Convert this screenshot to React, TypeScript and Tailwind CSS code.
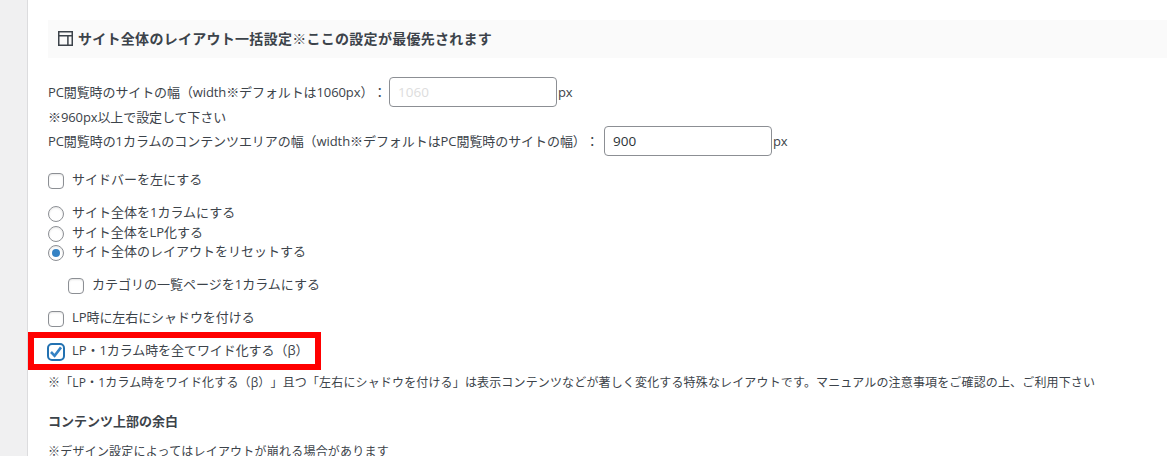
import type { ReactNode } from "react";

const CheckMark = () => (
  <svg viewBox="0 0 16 16" className="h-4 w-4 shrink-0" fill="none" stroke="#3582c4" strokeWidth="2.6">
    <path d="M3 8 6.6 11.8 13 3.4" />
  </svg>
);

const Box = ({ checked }: { checked?: boolean }) => (
  <span
    className={
      checked
        ? "-mx-px flex h-[18px] w-[18px] shrink-0 items-center justify-center rounded-[5px] border-2 border-[#2271b1] bg-white"
        : "h-4 w-4 shrink-0 rounded-[4px] border border-[#8c8f94] bg-white shadow-[inset_0_1px_2px_rgba(0,0,0,0.1)]"
    }
  >
    {checked && <CheckMark />}
  </span>
);

const Radio = ({ checked }: { checked?: boolean }) => (
  <span className="flex h-4 w-4 shrink-0 items-center justify-center rounded-full border border-[#8c8f94] bg-white shadow-[inset_0_1px_2px_rgba(0,0,0,0.1)]">
    {checked && <span className="h-2 w-2 rounded-full bg-[#3582c4]" />}
  </span>
);

type OptionProps = {
  control: ReactNode;
  className?: string;
  children: ReactNode;
};

const Option = ({ control, className = "", children }: OptionProps) => (
  <label className={`flex h-4 items-center ${className}`}>
    {control}
    <span className="ml-2 pb-[3px] whitespace-nowrap">{children}</span>
  </label>
);

const App = () => {
  return (
    <div className="relative flex h-[456px] w-[1167px] overflow-hidden bg-[#f0f0f1] font-['Open_Sans','Noto_Sans_CJK_JP',sans-serif] text-[13px] leading-[19px] text-[#3c434a] [text-spacing-trim:space-all]">
      <div className="w-[28px] shrink-0 border-r border-[#dcdcde]" />
      <main className="min-w-0 flex-1 bg-white pt-5 pl-5">
        <h2 className="flex h-[38px] items-center bg-[#fafafa] pb-0.5 pl-2.5 text-[14px] font-bold">
          <svg viewBox="0 0 15 15" className="h-[15px] w-[15px] shrink-0" fill="none" stroke="#3c434a" strokeWidth="1.5">
            <path d="M.75 .75h13.5v13.5H.75zM.75 4.75h13.5M9.9 4.75v9.5" />
          </svg>
          <span className="ml-[5px] tracking-[0.28px] whitespace-nowrap">
            サイト全体のレイアウト一括設定※ここの設定が最優先されます
          </span>
        </h2>

        <div className="mt-[19px] flex h-[30px] items-center whitespace-nowrap">
          <span className="w-[341px] tracking-[-0.1px]">PC閲覧時のサイトの幅（width※デフォルトは1060px）：</span>
          <input
            type="text"
            placeholder="1060"
            className="h-[30px] w-[168px] rounded-[4px] border border-[#8c8f94] bg-white px-2 text-[13.5px] text-[#2c3338] outline-none placeholder:text-[#dddddd]"
          />
          <span className="ml-px tracking-[-0.3px]">px</span>
        </div>
        <p className="h-[19px] pt-px tracking-[-0.1px] whitespace-nowrap">※960px以上で設定して下さい</p>
        <div className="flex h-[30px] items-center whitespace-nowrap">
          <span className="w-[556px] tracking-[-0.07px]">
            PC閲覧時の1カラムのコンテンツエリアの幅（width※デフォルトはPC閲覧時のサイトの幅）：
          </span>
          <input
            type="text"
            defaultValue="900"
            className="h-[30px] w-[168px] rounded-[4px] border border-[#8c8f94] bg-white px-2 text-[13.5px] text-[#2c3338] outline-none"
          />
          <span className="ml-px tracking-[-0.3px]">px</span>
        </div>

        <Option control={<Box />} className="mt-[17px]">サイドバーを左にする</Option>

        <Option control={<Radio />} className="mt-[17px]">サイト全体を1カラムにする</Option>
        <Option control={<Radio />} className="mt-1 tracking-[-0.07px]">サイト全体をLP化する</Option>
        <Option control={<Radio checked />} className="mt-[3px]">サイト全体のレイアウトをリセットする</Option>

        <Option control={<Box />} className="mt-[17px] ml-5">カテゴリの一覧ページを1カラムにする</Option>
        <Option control={<Box />} className="mt-[17px] tracking-[-0.07px]">LP時に左右にシャドウを付ける</Option>
        <Option control={<Box checked />} className="mt-[17px] tracking-[-0.07px]">LP・1カラム時を全てワイド化する（β）</Option>

        <p className="mt-[13px] text-[12px] tracking-[0.15px] whitespace-nowrap">
          ※「LP・1カラム時をワイド化する（β）」且つ「左右にシャドウを付ける」は表示コンテンツなどが著しく変化する特殊なレイアウトです。マニュアルの注意事項をご確認の上、ご利用下さい
        </p>
        <h3 className="mt-5 font-bold">コンテンツ上部の余白</h3>
        <p className="mt-[11px] text-[12px] tracking-[0.22px] whitespace-nowrap">
          ※デザイン設定によってはレイアウトが崩れる場合があります
        </p>
      </main>

      {/* red frame around the highlighted option */}
      <div className="pointer-events-none absolute top-[332px] left-[28px] h-[38px] w-[293px] border-[6px] border-[#ff0000]" />
    </div>
  );
};

export default App;
